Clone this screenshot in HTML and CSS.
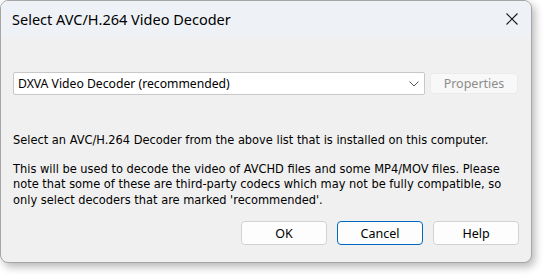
FILE: index.html
```html
<!DOCTYPE html>
<html lang="en">
<head>
  <meta charset="UTF-8" />
  <title>Select AVC/H.264 Video Decoder</title>
  <link rel="stylesheet" href="styles.css">
</head>
<body>

  <!-- Decoder dialog -->
  <div class="dialog">
    <div class="titlebar">
      <span class="title">Select AVC/H.264 Video Decoder</span>
      <svg class="close" width="12" height="12" viewBox="0 0 12 12">
        <path d="M0.5 0.5 L11.5 11.5 M11.5 0.5 L0.5 11.5" stroke="#1a1a1a" stroke-width="1.1" fill="none" />
      </svg>
    </div>

    <div class="content">
      <div class="row">
        <div class="combo">
          <span>DXVA Video Decoder (recommended)</span>
          <svg width="10" height="6" viewBox="0 0 10 6">
            <path d="M0.5 0.5 L5 5 L9.5 0.5" stroke="#555" stroke-width="1" fill="none" />
          </svg>
        </div>
        <button class="btn props" disabled>Properties</button>
      </div>

      <div class="info">
        <p>Select an AVC/H.264 Decoder from the above list that is installed on this computer.</p>
        <p>This will be used to decode the video of AVCHD files and some MP4/MOV files. Please<br>
          note that some of these are third-party codecs which may not be fully compatible, so<br>
          only select decoders that are marked 'recommended'.</p>
      </div>

      <div class="buttons">
        <button class="btn">OK</button>
        <button class="btn default">Cancel</button>
        <button class="btn">Help</button>
      </div>
    </div>
  </div>

</body>
</html>
```

FILE: styles.css
```css
* {
  margin: 0;
  padding: 0;
  box-sizing: border-box;
}

body {
  background: #fff;
  font-family: "Noto Sans", sans-serif;
  color: #000;
  width: 544px;
  height: 275px;
  overflow: hidden;
}

.dialog {
  width: 532px;
  height: 263px;
  border: 1px solid #a6a6a6;
  border-radius: 8px;
  overflow: hidden;
  display: flex;
  flex-direction: column;
  background: #f0f0f0;
  box-shadow: 3px 4px 9px rgba(0, 0, 0, 0.28);
}

.titlebar {
  height: 36px;
  display: flex;
  align-items: center;
  justify-content: space-between;
  padding: 0 13px 0 11px;
  background: #eef2f7;
}

.title {
  font-size: 14.5px;
  color: #000;
}

.content {
  flex: 1;
  display: flex;
  flex-direction: column;
  padding: 35px 12px 17px 12px;
}

.row {
  display: flex;
  align-items: center;
  gap: 5px;
}

.combo {
  width: 412px;
  height: 23px;
  background: #fff;
  border: 1px solid #c8c8c8;
  border-radius: 2px;
  display: flex;
  align-items: center;
  justify-content: space-between;
  padding: 0 5px 0 4px;
  font-size: 12.2px;
}

.btn {
  width: 86px;
  height: 24px;
  font-family: "Noto Sans", sans-serif;
  font-size: 12.5px;
  color: #000;
  background: #fdfdfd;
  border: 1px solid #d2d2d2;
  border-radius: 4px;
}

.btn.props {
  width: 88px;
  height: 21px;
  color: #8c8c8c;
  background: #f8f8f8;
  border-color: #ebebeb;
}

.btn.default {
  border-color: #0067c0;
}

.info {
  margin-top: 37px;
  font-family: "DejaVu Sans Condensed", "DejaVu Sans", sans-serif;
  font-size: 12.7px;
  line-height: 15.5px;
  white-space: nowrap;
}

.info p + p {
  margin-top: 13px;
}

.buttons {
  margin-top: auto;
  display: flex;
  justify-content: flex-end;
  gap: 10px;
}
```
